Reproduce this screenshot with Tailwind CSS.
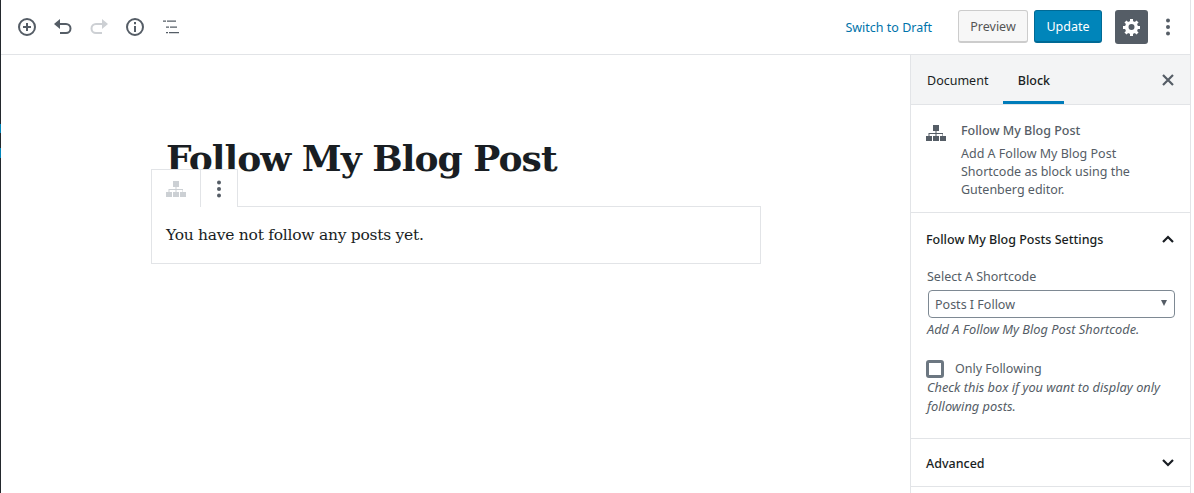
<!DOCTYPE html>
<html lang="en">
<head>
  <meta charset="utf-8" />
  <title>Edit Post</title>
  <script src="https://cdn.jsdelivr.net/npm/@tailwindcss/browser@4"></script>
</head>
<body class="bg-white overflow-hidden font-['Noto_Sans',sans-serif] text-[12.500px] text-[#555d66]">
  <div class="flex h-[493px] w-[1194px]">

    <!-- admin menu remnant -->
    <div class="w-px shrink-0 bg-[#23282d] relative">
      <div class="absolute left-0 top-[124px] w-px h-[9px] bg-[#0085ba]"></div>
      <div class="absolute left-0 top-[148px] w-px h-[10px] bg-[#0085ba]"></div>
    </div>

    <div class="w-[1190px] shrink-0 flex flex-col border-r border-[#e2e4e7]">

      <!-- Top toolbar -->
      <header class="h-[55px] shrink-0 border-b border-[#e2e4e7] flex items-center">
        <div class="flex items-center pl-[16px] gap-[16px]">
          <svg class="w-5 h-5" viewBox="0 0 20 20" fill="none" stroke="#555d66" stroke-width="2"><circle cx="10" cy="10" r="8"/><path d="M10 6v8M6 10h8"/></svg>
          <svg class="w-5 h-5" viewBox="0 0 20 20" fill="none" stroke="#555d66" stroke-width="2"><path d="M6 7h7a4.500 4.500 0 0 1 0 9H7"/><path d="M7 2v10L1 7z" fill="#555d66" stroke="none"/></svg>
          <svg class="w-5 h-5" viewBox="0 0 20 20" fill="none" stroke="#cdd0d4" stroke-width="2"><path d="M14 7H7a4.500 4.500 0 0 0 0 9h6"/><path d="M13 2v10l6-5z" fill="#cdd0d4" stroke="none"/></svg>
          <svg class="w-5 h-5" viewBox="0 0 20 20" fill="none" stroke="#555d66" stroke-width="2"><circle cx="10" cy="10" r="8"/><path d="M10 9v6M10 5v2.200"/></svg>
          <svg class="w-5 h-5" viewBox="0 0 20 20" fill="#555d66"><path d="M2 3.500h3v1.300H2zM6 3.500h9v1.300H6zM5 9.500h3v1.300H5zM9 9.500h7v1.300H9zM5 15h2v1.300H5zM8 15h10v1.300H8z"/></svg>
        </div>
        <div class="ml-auto flex items-center">
          <span class="text-[#0073aa] mr-[26px] pt-[3px]">Switch to Draft</span>
          <span class="w-[70px] h-[33px] -mt-px mr-[6px] pt-[3px] flex items-center justify-center rounded-[3px] border border-[#cccccc] border-b-2 bg-[#f7f7f7] text-[#555555]">Preview</span>
          <span class="w-[68px] h-[33px] -mt-px mr-[13px] pt-[3px] flex items-center justify-center rounded-[3px] border border-[#006a95] border-b-2 bg-[#0085ba] text-white">Update</span>
          <span class="w-[33px] h-[34px] mr-[10px] flex items-center justify-center rounded-[3px] bg-[#555d66]">
            <svg class="w-5 h-5" viewBox="0 0 20 20" fill="#ffffff"><path fill-rule="evenodd" d="M18 12h-2.180c-.17.7-.44 1.350-.81 1.930l1.540 1.540-2.100 2.100-1.540-1.540c-.58.360-1.230.640-1.910.810V19H8v-2.180c-.680-.170-1.330-.450-1.910-.810l-1.540 1.540-2.120-2.120 1.540-1.540c-.36-.58-.64-1.230-.81-1.890H1V9h2.170c.170-.700.440-1.350.810-1.930L2.440 5.530l2.100-2.100 1.540 1.540c.58-.370 1.230-.640 1.920-.810V2h3v2.170c.680.170 1.330.440 1.910.810l1.540-1.540 2.120 2.120-1.540 1.540c.360.580.640 1.230.810 1.900H18v3zM9.500 13a3 3 0 1 0 0-6 3 3 0 0 0 0 6z"/></svg>
          </span>
          <svg class="w-5 h-5 mr-[12px]" viewBox="0 0 20 20" fill="#555d66"><circle cx="10" cy="3.500" r="2"/><circle cx="10" cy="10" r="2"/><circle cx="10" cy="16.500" r="2"/></svg>
        </div>
      </header>

      <div class="flex-1 flex min-h-0">

        <!-- Editor -->
        <main class="flex-1 min-w-0 pl-[150px] pt-[78px]">
          <div class="w-[610px]">
            <h1 class="pl-[15px] h-[73px] font-['DejaVu_Serif',serif] text-[36px] leading-[50px] font-bold text-[#191e23] tracking-[-0.95px]">Follow My Blog Post</h1>
            <div class="relative border border-[#e2e4e7] h-[58px] pl-[14px] pt-[17px] font-['DejaVu_Serif',serif] text-[15.500px] leading-[22px] text-[#191e23] tracking-[-0.26px]">
              <div class="absolute -left-px -top-[38px] h-[38px] flex bg-white border border-b-0 border-[#e2e4e7]">
                <span class="w-[49px] flex items-center justify-center border-r border-[#e2e4e7]">
                  <svg class="w-5 h-5" viewBox="0 0 20 20" fill="#ccd0d4"><path d="M7 2h6v6h-2.500v2H17v3h3v5h-6v-5h2.500v-2h-6v2H13v5H7v-5h2.500v-2h-6v2H6v5H0v-5h2.500v-3h7V8H7z"/></svg>
                </span>
                <span class="w-[36px] flex items-center justify-center">
                  <svg class="w-5 h-5" viewBox="0 0 20 20" fill="#555d66"><circle cx="10" cy="3.500" r="2"/><circle cx="10" cy="10" r="2"/><circle cx="10" cy="16.500" r="2"/></svg>
                </span>
              </div>
              You have not follow any posts yet.
            </div>
          </div>
        </main>

        <!-- Settings sidebar -->
        <aside class="w-[280px] shrink-0 border-l border-[#e2e4e7] flex flex-col">
          <div class="h-[50px] shrink-0 bg-[#f3f4f5] border-b border-[#e2e4e7] flex items-center relative text-[#191e23]">
            <span class="ml-[16px] pt-[3px]">Document</span>
            <span class="ml-[15px] w-[61px] h-full flex items-center justify-center border-b-[3px] border-[#007cba] pt-[6px] font-medium">Block</span>
            <svg class="w-5 h-5 ml-auto mr-[12px]" viewBox="0 0 20 20" fill="none" stroke="#555d66" stroke-width="2.200"><path d="M5 5l10 10M15 5L5 15"/></svg>
          </div>

          <div class="h-[108px] shrink-0 border-b border-[#e2e4e7] flex pt-[17px] pl-[16px]">
            <svg class="w-5 h-5 shrink-0 mt-[1px] -ml-px mr-px" viewBox="0 0 20 20" fill="#555d66"><path d="M7 2h6v6h-2.500v2H17v3h3v5h-6v-5h2.500v-2h-6v2H13v5H7v-5h2.500v-2h-6v2H6v5H0v-5h2.500v-3h7V8H7z"/></svg>
            <div class="ml-[14px] w-[200px] leading-[18px]">
              <div class="font-medium mb-[5px]">Follow My Blog Post</div>
              <div>Add A Follow My Blog Post Shortcode as block using the Gutenberg editor.</div>
            </div>
          </div>

          <div class="h-[226px] shrink-0 border-b border-[#e2e4e7] px-[16px]">
            <div class="flex items-center justify-between h-[54px] -ml-px font-medium text-[#191e23]">
              Follow My Blog Posts Settings
              <svg class="w-5 h-5 -mr-[4px] -mt-[2px]" viewBox="0 0 20 20" fill="none" stroke="#191e23" stroke-width="2.200"><path d="M5 13l5-5 5 5"/></svg>
            </div>
            <div class="leading-[18px] mt-[1px]">Select A Shortcode</div>
            <div class="mt-[4px] ml-[1px] w-[247px] h-[28px] border border-[#7e8993] rounded-[4px] flex items-center justify-between pl-[6px] pr-[7px]">
              <span class="pt-[3px]">Posts I Follow</span>
              <span class="w-0 h-0 border-x-[3.500px] border-x-transparent border-t-[6px] border-t-[#555d66] mb-[2px]"></span>
            </div>
            <div class="italic text-[12.800px] leading-[18px] mt-[2px]">Add A Follow My Blog Post Shortcode.</div>
            <div class="flex items-center mt-[22px] h-[18px]">
              <span class="w-[18px] h-[18px] -ml-px border-[3px] border-[#6c7781] rounded-[3px] bg-white"></span>
              <span class="ml-[11px]">Only Following</span>
            </div>
            <div class="italic text-[12.800px] leading-[19px] w-[250px]">Check this box if you want to display only following posts.</div>
          </div>

          <div class="h-[48px] shrink-0 border-b border-[#e2e4e7] px-[16px] flex items-center justify-between font-medium text-[#191e23]">
            <span class="-ml-px pt-[3px]">Advanced</span>
            <svg class="w-5 h-5 -mr-[4px]" viewBox="0 0 20 20" fill="none" stroke="#191e23" stroke-width="2.200"><path d="M5 7l5 5 5-5"/></svg>
          </div>
        </aside>
      </div>
    </div>
  </div>
</body>
</html>
